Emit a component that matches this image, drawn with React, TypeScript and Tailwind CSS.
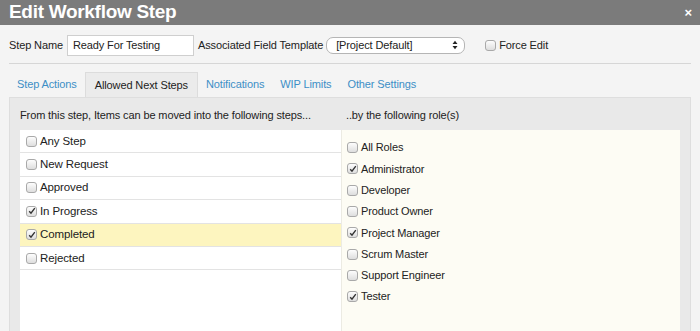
import { useState } from "react";

const steps = [
  { name: "Any Step", checked: false },
  { name: "New Request", checked: false },
  { name: "Approved", checked: false },
  { name: "In Progress", checked: true },
  { name: "Completed", checked: true, selected: true },
  { name: "Rejected", checked: false },
];

const roles = [
  { name: "All Roles", checked: false },
  { name: "Administrator", checked: true },
  { name: "Developer", checked: false },
  { name: "Product Owner", checked: false },
  { name: "Project Manager", checked: true },
  { name: "Scrum Master", checked: false },
  { name: "Support Engineer", checked: false },
  { name: "Tester", checked: true },
];

const tabs = ["Step Actions", "Allowed Next Steps", "Notifications", "WIP Limits", "Other Settings"];

function Check({ checked }: { checked: boolean }) {
  return (
    <span className="w-[11px] h-[11px] rounded-[3px] border border-[#a9a9a9] bg-gradient-to-b from-[#fdfdfd] to-[#dedede] flex items-center justify-center shrink-0">
      {checked && (
        <svg width="8" height="8" viewBox="0 0 8 8">
          <path d="M1.2 4.2 L3 6.2 L6.8 1.2" fill="none" stroke="#333" strokeWidth="1.4" />
        </svg>
      )}
    </span>
  );
}

export default function App() {
  const [active] = useState(1);

  return (
    <div className="w-[700px] h-[331px] overflow-hidden bg-[#f4f4f4] text-[11px] tracking-[-0.12px] text-[#222] font-['Liberation_Sans',Arial,sans-serif]">
      <div className="h-[25px] bg-[#7b7b7b] flex items-center justify-between pl-[9px] pr-[8px]">
        <span className="text-white font-bold text-[19px] tracking-[-0.3px]">Edit Workflow Step</span>
        <span className="text-white font-bold text-[13px] leading-none">×</span>
      </div>

      <div className="px-[9px]">
        <div className="flex items-center h-[39px] border-b border-[#d6d6d6] pt-[2px]">
          <span>Step Name</span>
          <div className="ml-[4px] w-[127px] h-[21px] bg-white border border-[#cfcfcf] flex items-center px-[5px]">
            Ready For Testing
          </div>
          <span className="ml-[4px]">Associated Field Template</span>
          <div className="ml-[3px] w-[139px] h-[17px] bg-white border border-[#b5b5b5] rounded-[7px] flex items-center justify-between pl-[9px] pr-[6px]">
            <span>[Project Default]</span>
            <svg width="6" height="10" viewBox="0 0 6 10">
              <path d="M0.5 4 L3 0.8 L5.5 4 Z M0.5 6 L3 9.2 L5.5 6 Z" fill="#222" />
            </svg>
          </div>
          <span className="ml-[20px]">
            <Check checked={false} />
          </span>
          <span className="ml-[3px]">Force Edit</span>
        </div>

        <div className="flex h-[33px] items-end pt-[8px]">
          {tabs.map((t, i) => (
            <div
              key={t}
              className={
                i === active
                  ? "h-[25px] px-[9px] flex items-center bg-[#ebebeb] border border-b-0 border-[#dcdcdc] text-[#222]"
                  : "h-[25px] px-[8px] flex items-center text-[#3d8fc6]"
              }
            >
              {t}
            </div>
          ))}
        </div>

        <div className="bg-[#e9e9e9] border border-[#dedede] px-[10px] h-[240px]">
          <div className="flex h-[32px] items-center pt-[2px]">
            <div className="w-[321px]">From this step, Items can be moved into the following steps...</div>
            <div className="pl-[5px]">..by the following role(s)</div>
          </div>
          <div className="flex h-[210px]">
            <div className="w-[321px] bg-white">
              {steps.map((s) => (
                <div
                  key={s.name}
                  className={
                    s.selected
                      ? "h-[23.4px] border-b border-[#e3e3e3] flex items-center gap-[3px] pl-[6px] text-[11.5px] bg-[#fdf5bf]"
                      : "h-[23.4px] border-b border-[#e3e3e3] flex items-center gap-[3px] pl-[6px] text-[11.5px]"
                  }
                >
                  <Check checked={s.checked} />
                  <span>{s.name}</span>
                </div>
              ))}
            </div>
            <div className="flex-1 bg-[#fdfcf4] border-l border-[#ecebe3] pt-[7px]">
              {roles.map((r) => (
                <div key={r.name} className="h-[21.3px] flex items-center gap-[3px] pl-[5px]">
                  <Check checked={r.checked} />
                  <span>{r.name}</span>
                </div>
              ))}
            </div>
          </div>
        </div>
      </div>
    </div>
  );
}
